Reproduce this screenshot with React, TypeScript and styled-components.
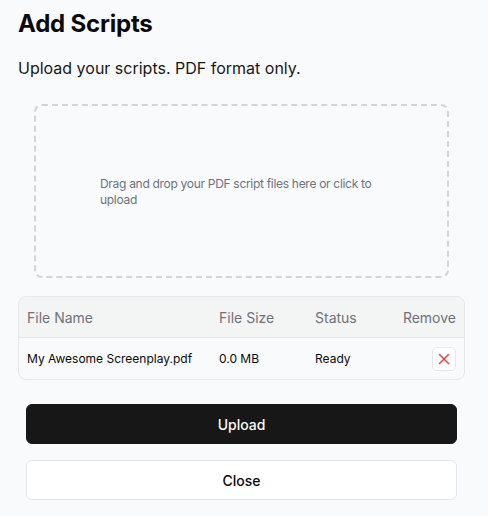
import React from "react";
import styled, { createGlobalStyle } from "styled-components";

const Global = createGlobalStyle`
  html, body { margin: 0; padding: 0; background: #f9fafb; }
  body { font-family: Inter, "Noto Sans", sans-serif; color: #0a0a0a; }
  * { box-sizing: border-box; }
`;

const Page = styled.div`
  width: 488px;
  height: 516px;
  padding: 10px 23px 0 18px;
  display: flex;
  flex-direction: column;
`;

const Title = styled.h1`
  margin: 0;
  font-size: 24px;
  line-height: 28px;
  font-weight: 700;
  letter-spacing: -0.2px;
`;

const Subtitle = styled.p`
  margin: 18px 0 0 0;
  font-size: 16px;
  line-height: 24px;
  color: #171717;
`;

const Drop = styled.div`
  margin: 24px 16px 0 16px;
  height: 174px;
  border: 2px dashed #d4d4d8;
  border-radius: 8px;
  display: flex;
  align-items: center;
  padding: 2px 64px 0 64px;
  font-size: 12px;
  line-height: 16px;
  letter-spacing: -0.3px;
  color: #6b7280;
`;

const Table = styled.div`
  margin-top: 18px;
  border: 1px solid #e5e7eb;
  border-radius: 8px;
  overflow: hidden;
  background: #f9fafb;
`;

const Row = styled.div<{ $head?: boolean }>`
  display: grid;
  grid-template-columns: 192px 96px 1fr auto;
  align-items: center;
  height: 41px;
  background: ${(p) => (p.$head ? "#f3f4f4" : "transparent")};
  border-bottom: ${(p) => (p.$head ? "1px solid #e5e7eb" : "none")};
  font-size: ${(p) => (p.$head ? "14px" : "12px")};
  color: ${(p) => (p.$head ? "#71717a" : "#0a0a0a")};
`;

const Cell = styled.div<{ $right?: boolean }>`
  padding: 0 8px;
  display: flex;
  justify-content: ${(p) => (p.$right ? "flex-end" : "flex-start")};
  white-space: nowrap;
`;

const RemoveBtn = styled.button`
  width: 24px;
  height: 24px;
  border: 1px solid #e5e7eb;
  border-radius: 5px;
  background: #ffffff;
  display: flex;
  align-items: center;
  justify-content: center;
  padding: 0;
  cursor: pointer;
`;

const Actions = styled.div`
  margin: 24px 8px 0 8px;
  display: flex;
  flex-direction: column;
  gap: 16px;
`;

const Button = styled.button<{ $primary?: boolean }>`
  height: 40px;
  border-radius: 6px;
  font-family: Inter, "Noto Sans", sans-serif;
  font-size: 14px;
  font-weight: 500;
  border: 1px solid ${(p) => (p.$primary ? "#171717" : "#e5e7eb")};
  background: ${(p) => (p.$primary ? "#171717" : "#ffffff")};
  color: ${(p) => (p.$primary ? "#fafafa" : "#0a0a0a")};
  cursor: pointer;
`;

export default function App() {
  return (
    <>
      <Global />
      <Page>
        <Title>Add Scripts</Title>
        <Subtitle>Upload your scripts. PDF format only.</Subtitle>
        <Drop>Drag and drop your PDF script files here or click to upload</Drop>
        <Table>
          <Row $head>
            <Cell>File Name</Cell>
            <Cell>File Size</Cell>
            <Cell>Status</Cell>
            <Cell $right>Remove</Cell>
          </Row>
          <Row>
            <Cell>My Awesome Screenplay.pdf</Cell>
            <Cell>0.0 MB</Cell>
            <Cell>Ready</Cell>
            <Cell $right>
              <RemoveBtn aria-label="Remove">
                <svg width="12" height="12" viewBox="0 0 12 12" fill="none" stroke="#ef4444" strokeWidth="1.5" strokeLinecap="round">
                  <path d="M1.5 1.5 L10.5 10.5 M10.5 1.5 L1.5 10.5" />
                </svg>
              </RemoveBtn>
            </Cell>
          </Row>
        </Table>
        <Actions>
          <Button $primary>Upload</Button>
          <Button>Close</Button>
        </Actions>
      </Page>
    </>
  );
}
